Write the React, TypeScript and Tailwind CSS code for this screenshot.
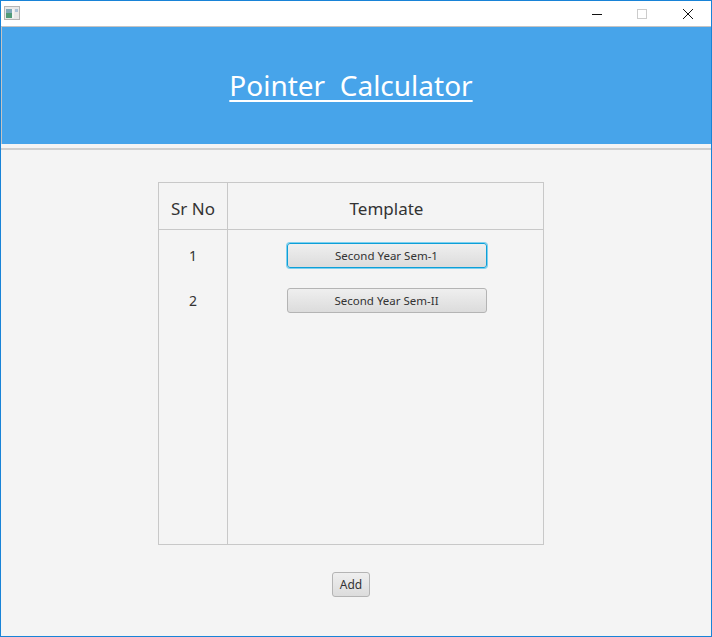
const font = { fontFamily: '"Noto Sans", "Open Sans", sans-serif' };

const rows = [
  { no: '1', label: 'Second Year Sem-1', focused: true },
  { no: '2', label: 'Second Year Sem-II', focused: false },
];

function TitleBar() {
  return (
    <div className="flex h-[25px] items-center bg-white">
      <svg width="16" height="14" viewBox="0 0 16 14" className="ml-[3px] mb-[1px]">
        <rect x="0.5" y="0.5" width="15" height="13" fill="#e8e8e8" stroke="#b5b5b5" />
        <rect x="2" y="3" width="6" height="4" fill="#7fa8b8" />
        <rect x="2" y="7" width="6" height="5" fill="#4f9a78" />
        <rect x="8" y="3" width="2" height="9" fill="#f4f4f4" />
        <rect x="11" y="3" width="3" height="3" fill="#a9c2d8" />
      </svg>
      <div className="ml-auto flex items-center">
        <svg width="12" height="12" viewBox="0 0 12 12" className="mr-[33px]">
          <path d="M1 6.5H11" stroke="#111" strokeWidth="1" />
        </svg>
        <svg width="12" height="12" viewBox="0 0 12 12" className="mr-[34px]">
          <rect x="1.5" y="1.5" width="9" height="9" fill="none" stroke="#ccc" />
        </svg>
        <svg width="12" height="12" viewBox="0 0 12 12" className="mr-[17px]">
          <path d="M1 1L11 11M11 1L1 11" stroke="#111" strokeWidth="1" />
        </svg>
      </div>
    </div>
  );
}

function SemButton({ label, focused }: { label: string; focused: boolean }) {
  return (
    <button
      className={`flex h-[25px] w-[200px] items-center justify-center rounded-[3px] border bg-gradient-to-b from-[#efefef] to-[#dcdcdc] text-[11.5px] text-[#333] ${
        focused ? 'border-[#0d9fd8] shadow-[0_0_0_1px_#7fd0ee]' : 'border-[#b4b4b4]'
      }`}
    >
      {label}
    </button>
  );
}

export default function App() {
  return (
    <div
      className="flex h-[637px] w-[712px] flex-col overflow-hidden border border-[#1883d7] bg-[#f4f4f4]"
      style={font}
    >
      <TitleBar />
      <div className="flex h-[118px] items-center justify-center border-t border-l border-[#c4c4c4] bg-[#47a4ea] pr-[11px] pb-[2px]">
        <h1 className="text-[28px] leading-none text-white underline decoration-2 underline-offset-[4px] whitespace-pre">
          Pointer  Calculator
        </h1>
      </div>
      <div className="mt-[4px] border-t-2 border-[#cfcfcf]" />

      <div className="ml-[157px] mt-[32px] flex h-[363px] w-[386px] border border-[#c8c8c8] text-[#333]">
        <div className="flex w-[69px] flex-col border-r border-[#c8c8c8]">
          <div className="flex h-[47px] items-center justify-center border-b border-[#c8c8c8] pt-[5px] text-[17px]">
            Sr No
          </div>
          <div className="flex flex-col pt-[3px]">
            {rows.map((r) => (
              <div key={r.no} className="flex h-[45px] items-center justify-center text-[14px]">
                {r.no}
              </div>
            ))}
          </div>
        </div>
        <div className="flex flex-1 flex-col">
          <div className="flex h-[47px] items-center justify-center border-b border-[#c8c8c8] pl-[2px] pt-[5px] text-[17px]">
            Template
          </div>
          <div className="flex flex-col pl-[2px] pt-[3px]">
            {rows.map((r) => (
              <div key={r.no} className="flex h-[45px] items-center justify-center">
                <SemButton label={r.label} focused={r.focused} />
              </div>
            ))}
          </div>
        </div>
      </div>

      <div className="mt-[27px] flex justify-center pr-[10px]">
        <button className="h-[25px] w-[38px] rounded-[3px] border border-[#b4b4b4] bg-gradient-to-b from-[#efefef] to-[#dcdcdc] text-[12px] text-[#333]">
          Add
        </button>
      </div>
    </div>
  );
}
